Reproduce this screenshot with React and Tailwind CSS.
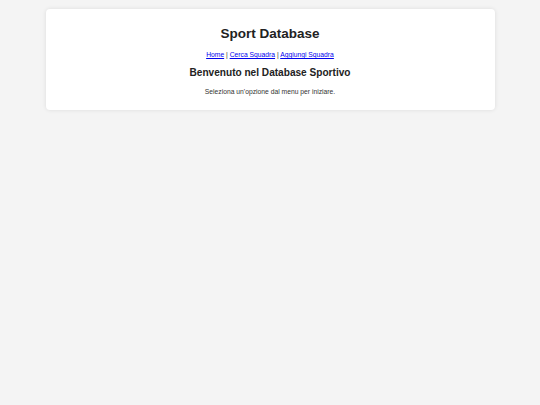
export default function App() {
  return (
    <div className="min-h-screen bg-[#f4f4f4] pt-[9px] font-['Liberation_Sans',Arial,sans-serif] text-[#333]">
      <div className="mx-auto w-[449px] bg-white rounded-[4px] shadow-[0_0_4px_rgba(0,0,0,0.1)] px-[8px] pt-[17px] pb-[14px] text-center">
        <h1 className="text-[13.5px] font-bold leading-[16px] text-[#222]">Sport Database</h1>

        {/* Menu */}
        <nav className="mt-[9px] text-[6.75px] leading-[8px]">
          <a href="#" className="text-[#0000ee] underline">Home</a>
          {' | '}
          <a href="#" className="text-[#0000ee] underline">Cerca Squadra</a>
          {' | '}
          <a href="#" className="text-[#0000ee] underline">Aggiungi Squadra</a>
        </nav>

        <h2 className="mt-[8px] text-[10.1px] font-bold leading-[12px] text-[#222]">
          Benvenuto nel Database Sportivo
        </h2>
        <p className="mt-[9px] text-[6.75px] leading-[8px]">
          Seleziona un'opzione dal menu per iniziare.
        </p>
      </div>
    </div>
  )
}
